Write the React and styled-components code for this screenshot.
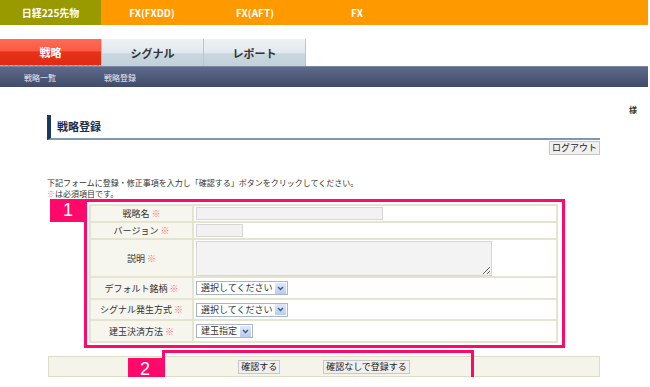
import React from 'react';
import styled, { createGlobalStyle } from 'styled-components';

const GlobalStyle = createGlobalStyle`
    body {
        margin: 0;
        background: #fff;
        font-family: "Noto Sans CJK JP", "Liberation Sans", sans-serif;
        color: #333;
    }
`

const Page = styled.div`
    width: 648px;
`

// top product bar
const TopBar = styled.nav`
    display: flex;
    height: 25px;
    background: #ff9900;
`
const TopItem = styled.div`
    width: ${p => p.$w}px;
    display: flex;
    align-items: center;
    justify-content: center;
    font-size: 10px;
    font-weight: 700;
    color: #fff;
    background: ${p => (p.$active ? '#999900' : 'transparent')};
`

// section tabs
const Tabs = styled.div`
    display: flex;
    margin-top: 14px;
    height: 27px;
`
const Tab = styled.div`
    width: 101px;
    display: flex;
    align-items: center;
    justify-content: center;
    font-size: 11px;
    font-weight: 700;
    border-right: 1px solid #b8c6d0;
    color: ${p => (p.$active ? '#fff' : '#333')};
    background: ${p => (p.$active
        ? 'linear-gradient(#ff6b55 0%, #ff5a42 45%, #e8311a 50%, #e02a12 100%)'
        : 'linear-gradient(#eef2f5 0%, #e2e9ee 50%, #c9d7e0 55%, #c2d1db 100%)')};
    border-bottom: ${p => (p.$active ? '1px dashed #ff9a88' : 'none')};
`

const SubNav = styled.div`
    display: flex;
    height: 21px;
    align-items: center;
    background: linear-gradient(#5f6a8a, #404b6a);
    border-top: 1px solid #7a86a4;
    box-sizing: border-box;
`
const SubItem = styled.span`
    font-size: 8px;
    color: #e8ebf2;
    margin-left: ${p => p.$ml}px;
`

const UserLine = styled.div`
    height: 28px;
    box-sizing: border-box;
    padding: 18px 11px 0 0;
    text-align: right;
    font-size: 8px;
    line-height: 10px;
    font-weight: 700;
`

const Content = styled.main`
    margin-left: 47px;
    width: 553px;
`

const Heading = styled.h2`
    margin: 0;
    height: 21px;
    display: flex;
    align-items: center;
    border-left: 4px solid #1a3866;
    border-bottom: 2px solid #8096b0;
    padding: 0 0 2px 6px;
    box-sizing: content-box;
    font-size: 11px;
    font-weight: 700;
    color: #1a2c4c;
`

const LogoutRow = styled.div`
    display: flex;
    justify-content: flex-end;
    margin-top: 1px;
`
const Button = styled.button`
    font-family: inherit;
    font-size: 9px;
    line-height: 12px;
    padding: 0 2px;
    color: #222;
    background: #f0f0f0;
    border: 1px solid #c8c8c8;
    border-radius: 0;
`

const Intro = styled.p`
    margin: 22px 0 0;
    font-size: 8px;
    line-height: 11px;
`
const Req = styled.span`
    color: #ff6a7a;
`

const Frame = styled.div`
    position: relative;
    margin: 0 0 0 37px;
    width: 481px;
    box-sizing: border-box;
    border: 3px solid #ff0a6a;
    padding: 2px 4px 2px 2px;
`
const Badge = styled.div`
    position: absolute;
    left: ${p => p.$l}px;
    top: ${p => p.$t}px;
    width: ${p => p.$w}px;
    height: 23px;
    background: #ff0a6a;
    color: #fff;
    font-family: "Liberation Sans", sans-serif;
    font-size: 18px;
    line-height: 23px;
    text-align: center;
`

const FormTable = styled.table`
    width: 469px;
    border-collapse: collapse;
    border: 2px solid #e4e4cf;
    font-size: 9px;
`
const Th = styled.th`
    width: 101px;
    font-weight: 400;
    background: #f6f6ee;
    border: 2px solid #e4e4cf;
    text-align: center;
    padding: 0;
    height: ${p => p.$h}px;
`
const Td = styled.td`
    border: 2px solid #e4e4cf;
    padding: 0 2px;
    background: #fff;
    line-height: 0;
`

const TextBox = styled.div`
    width: ${p => p.$w}px;
    height: 11px;
    background: #f2f2f2;
    border: 1px solid #d6d6d6;
`
const Area = styled.textarea`
    display: block;
    width: 296px;
    height: 35px;
    box-sizing: border-box;
    background: #f3f3f3;
    border: 1px solid #d6d6d6;
    margin: 0;
`
const Select = styled.div`
    display: inline-flex;
    align-items: center;
    gap: 3px;
    height: 14px;
    line-height: 12px;
    box-sizing: border-box;
    border: 1px solid #a8b6cc;
    padding: 0 1px 0 4px;
    background: #fff;
    font-size: 9px;
`
const Arrow = styled.span`
    width: 11px;
    height: 11px;
    background: linear-gradient(#dfe8f8, #b9cbea);
    display: flex;
    align-items: center;
    justify-content: center;
`

const Chevron = () => (
    <svg width="7" height="5" viewBox="0 0 7 5">
        <path d="M1 1 L3.5 3.5 L6 1" fill="none" stroke="#3a5690" strokeWidth="1.4" />
    </svg>
)

const ActionBar = styled.div`
    position: relative;
    margin: 8px 0 0 1px;
    width: 552px;
    height: 21px;
    box-sizing: border-box;
    background: #f4f4ea;
    border: 1px solid #dedec6;
    display: flex;
    align-items: center;
    justify-content: center;
    gap: 43px;
`
const Outline = styled.div`
    position: absolute;
    left: 113px;
    top: -7px;
    width: 312px;
    height: 31px;
    box-sizing: border-box;
    border: 3px solid #ff0a6a;
`

const rows = [
    { label: 'シグナル発生方式', value: '選択してください', h: 19 },
    { label: '建玉決済方法', value: '建玉指定', h: 20 },
]

const App = () => {
    return (
        <Page>
            <GlobalStyle />
            <TopBar>
                <TopItem $w={101} $active>日経225先物</TopItem>
                <TopItem $w={102}>FX(FXDD)</TopItem>
                <TopItem $w={104}>FX(AFT)</TopItem>
                <TopItem $w={100}>FX</TopItem>
            </TopBar>
            <Tabs>
                <Tab $active>戦略</Tab>
                <Tab>シグナル</Tab>
                <Tab>レポート</Tab>
            </Tabs>
            <SubNav>
                <SubItem $ml={24}>戦略一覧</SubItem>
                <SubItem $ml={48}>戦略登録</SubItem>
            </SubNav>
            <UserLine>様</UserLine>
            <Content>
                <Heading>戦略登録</Heading>
                <LogoutRow>
                    <Button>ログアウト</Button>
                </LogoutRow>
                <Intro>
                    下記フォームに登録・修正事項を入力し「確認する」ボタンをクリックしてください。<br />
                    <Req>※</Req>は必須項目です。
                </Intro>
                <Frame>
                    <Badge $l={-37} $t={-3} $w={36}>1</Badge>
                    <FormTable>
                        <tbody>
                            <tr>
                                <Th $h={15}>戦略名 <Req>※</Req></Th>
                                <Td><TextBox $w={185} /></Td>
                            </tr>
                            <tr>
                                <Th $h={15}>バージョン <Req>※</Req></Th>
                                <Td><TextBox $w={45} /></Td>
                            </tr>
                            <tr>
                                <Th $h={36}>説明 <Req>※</Req></Th>
                                <Td><Area readOnly /></Td>
                            </tr>
                            <tr>
                                <Th $h={20}>デフォルト銘柄 <Req>※</Req></Th>
                                <Td>
                                    <Select>選択してください<Arrow><Chevron /></Arrow></Select>
                                </Td>
                            </tr>
                            {rows.map(r => (
                                <tr key={r.label}>
                                    <Th $h={r.h}>{r.label} <Req>※</Req></Th>
                                    <Td>
                                        <Select>{r.value}<Arrow><Chevron /></Arrow></Select>
                                    </Td>
                                </tr>
                            ))}
                        </tbody>
                    </FormTable>
                </Frame>
                <ActionBar>
                    <Outline />
                    <Badge $l={79} $t={1} $w={34}>2</Badge>
                    <Button>確認する</Button>
                    <Button>確認なしで登録する</Button>
                </ActionBar>
            </Content>
        </Page>
    );
};

export default App;
